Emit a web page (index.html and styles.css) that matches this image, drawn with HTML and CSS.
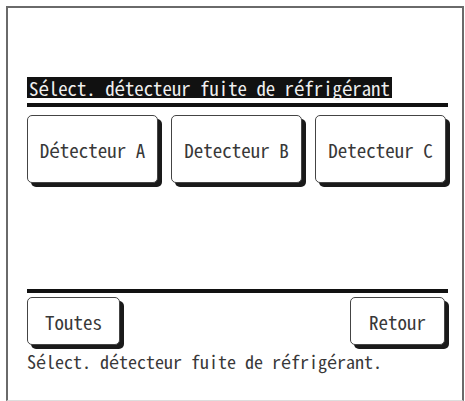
FILE: index.html
```html
<!DOCTYPE html>
<html lang="fr">
<head>
<meta charset="utf-8">
<link rel="stylesheet" href="styles.css">
</head>
<body>
<div class="frame">
  <div class="title-row"><span class="title">Sélect. détecteur fuite de réfrigérant</span></div>
  <div class="rule"></div>
  <div class="choices">
    <div class="btn big">Détecteur A</div>
    <div class="btn big">Detecteur B</div>
    <div class="btn big">Detecteur C</div>
  </div>
  <div class="rule rule-low"></div>
  <div class="actions">
    <div class="btn small toutes">Toutes</div>
    <div class="btn small retour">Retour</div>
  </div>
  <div class="status">Sélect. détecteur fuite de réfrigérant.</div>
</div>
</body>
</html>
```
FILE: styles.css
```css
html, body {
  margin: 0;
  padding: 0;
  background: #fff;
}
body {
  padding: 6px 1px 0 6px;
  font-family: "Noto Sans Mono CJK JP", "DejaVu Sans Mono", monospace;
  color: #383838;
}
.frame {
  box-sizing: border-box;
  width: 458px;
  height: 395px;
  border: 2px solid #6a6a6a;
  border-bottom: 1px solid #ddd;
  padding: 0 14px 0 19px;
  display: flex;
  flex-direction: column;
}
.title-row {
  margin-top: 69px;
  display: flex;
}
.title {
  background: #111;
  color: #f0f0f0;
  font-size: 18.8px;
  height: 21px;
  line-height: 21px;
  padding: 0 2px;
  white-space: nowrap;
}
.rule {
  margin-top: 5px;
  height: 4px;
  background: #111;
}
.choices {
  margin-top: 8px;
  display: grid;
  grid-template-columns: 131px 131px 131px;
  column-gap: 13px;
}
.btn {
  box-sizing: border-box;
  border: 1.5px solid #444;
  border-radius: 5px;
  background: #fff;
  box-shadow: 4px 4px 0 #1a1a1a;
  display: flex;
  align-items: center;
  justify-content: center;
  white-space: nowrap;
  color: #383838;
}
.big {
  height: 68px;
  font-size: 19px;
}
.rule-low {
  margin-top: 106px;
  height: 4px;
}
.actions {
  margin-top: 4px;
  display: flex;
  justify-content: space-between;
  padding-right: 3px;
}
.small {
  height: 48px;
  font-size: 19px;
}
.toutes { width: 93px; }
.retour { width: 95px; }
.status {
  margin-top: 6px;
  font-size: 18px;
  line-height: 20px;
  white-space: nowrap;
}
```
